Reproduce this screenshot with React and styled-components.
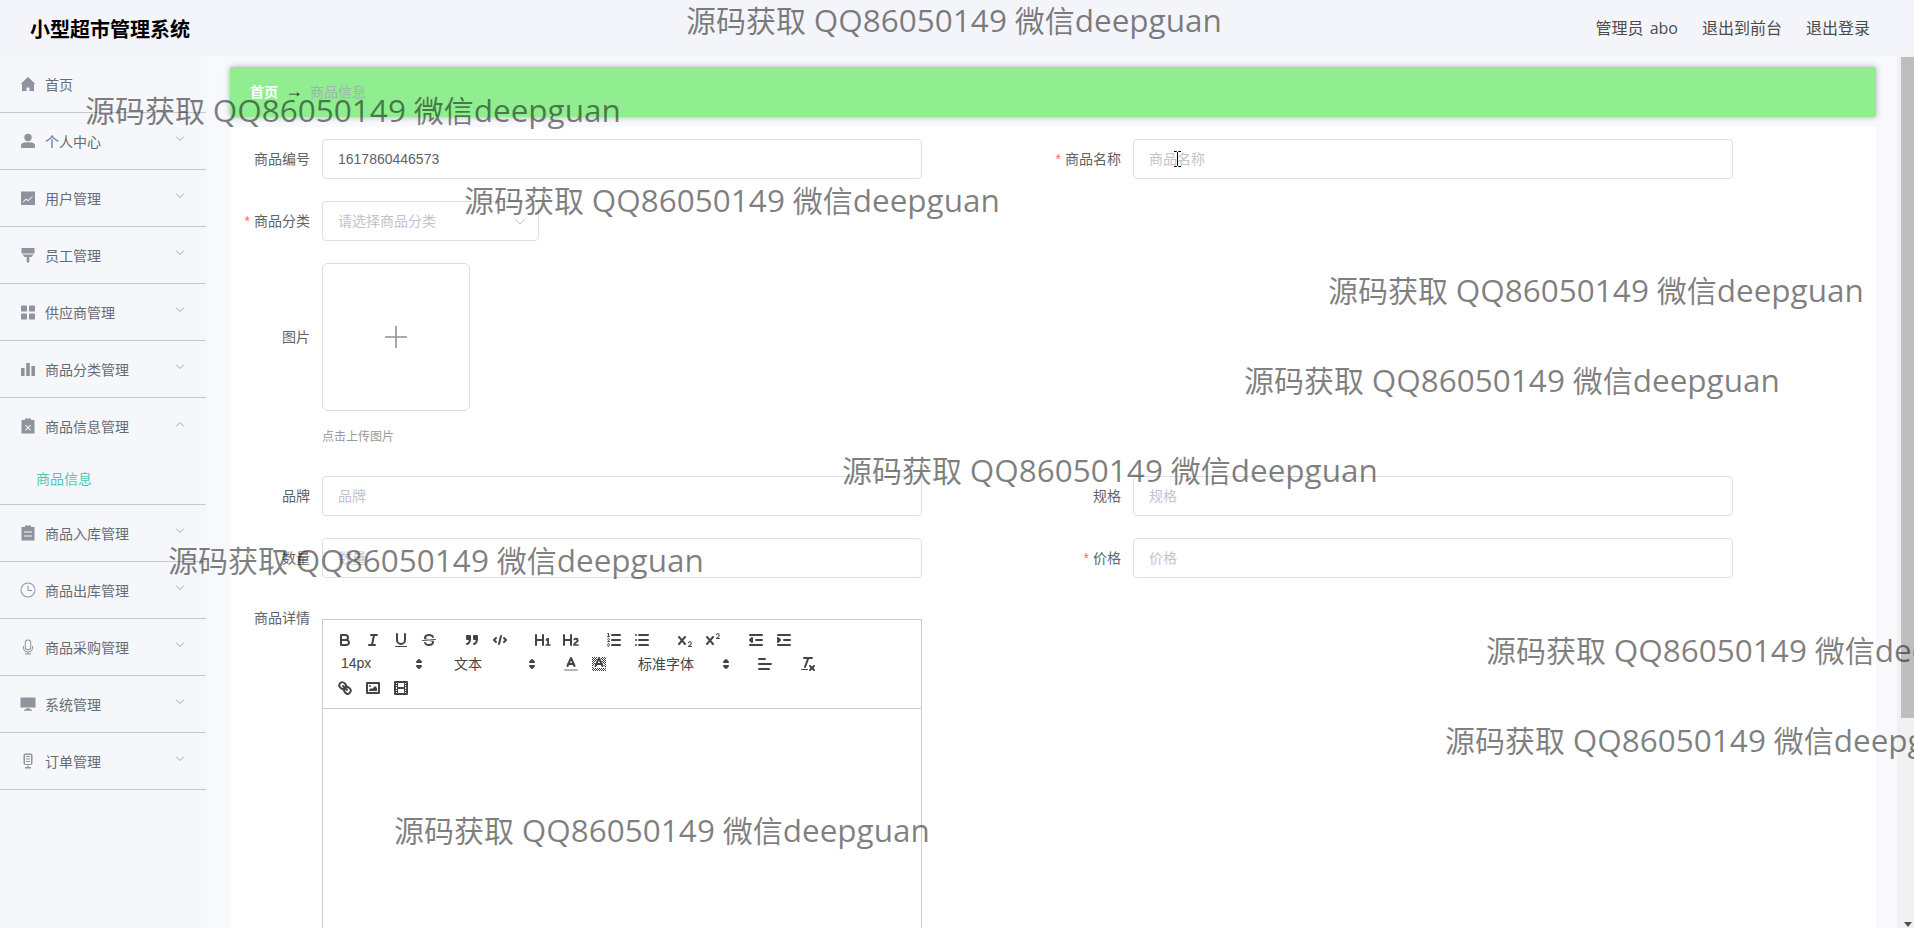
import styled, { createGlobalStyle } from "styled-components";

const GlobalStyle = createGlobalStyle`
  html, body {
    margin: 0;
    height: 100%;
    overflow: hidden;
    background: #f5f7fb;
    font-family: "Liberation Sans", "Noto Sans CJK SC", sans-serif;
  }
  * { box-sizing: border-box; }
`;

const Shell = styled.div`
  position: relative;
  display: flex;
  flex-direction: column;
  height: 100vh;
  overflow: hidden;
`;

const Header = styled.header`
  flex: none;
  display: flex;
  align-items: center;
  justify-content: space-between;
  height: 56px;
  padding: 0 44px 0 30px;
  background: #f4f5fa;
`;

const Brand = styled.h1`
  margin: 0;
  font-size: 20px;
  font-weight: 700;
  color: #000;
`;

const HeaderLinks = styled.nav`
  display: flex;
  gap: 24px;
  padding-bottom: 2px;
  font-family: "Open Sans", "Noto Sans CJK SC", sans-serif;
  font-size: 16px;
  word-spacing: 2px;
  color: #4c4c4c;
`;

const Body = styled.div`
  flex: 1;
  min-height: 0;
  display: flex;
`;

const Sidebar = styled.aside`
  flex: none;
  width: 206px;
`;

const NavRow = styled.div`
  display: flex;
  align-items: center;
  height: 57px;
  padding-left: 21px;
  border-bottom: 1px solid ${(p) => (p.$open ? "transparent" : "#c6c9d1")};
  font-size: 14px;
  color: #666b75;
`;

const NavIcon = styled.svg`
  flex: none;
  width: 16px;
  height: 16px;
  margin-left: -1px;
  margin-right: 9px;
  fill: #8f939d;
`;

const NavText = styled.span`
  flex: 1;
`;

const Chevron = styled.svg`
  flex: none;
  width: 10px;
  height: 6px;
  margin: 0 21px 4px 0;
  fill: none;
  stroke: #a3a6ad;
  stroke-width: 1;
`;

const SubRow = styled.div`
  display: flex;
  align-items: center;
  height: 50px;
  padding: 0 0 4px 36px;
  border-bottom: 1px solid #c6c9d1;
  font-size: 14px;
  color: #4fc8b8;
`;

const Content = styled.main`
  flex: 1;
  min-width: 0;
  padding: 11px 21px 0 24px;
  background: #f8f9fd;
`;

const Crumbs = styled.div`
  display: flex;
  align-items: center;
  height: 50px;
  padding: 0 0 2px 20px;
  border-radius: 2px;
  background: #90ee90;
  box-shadow: 0 0 6px rgba(0, 0, 0, 0.3);
  font-size: 14px;
`;

const CrumbHome = styled.span`
  font-weight: 700;
  color: #fff;
`;

const CrumbArrow = styled.span`
  width: 32px;
  text-align: center;
  font-size: 18px;
  line-height: 20px;
  color: #303133;
`;

const CrumbCurrent = styled.span`
  color: #9db6aa;
`;

const Panel = styled.section`
  margin-top: 10px;
  height: 900px;
  padding-top: 12px;
  background: #fff;
`;

const FormRow = styled.div`
  display: flex;
  margin-bottom: 22px;
`;

const Field = styled.div`
  display: flex;
  align-items: ${(p) => (p.$top ? "flex-start" : "center")};
  width: 811px;
`;

const Label = styled.label`
  flex: none;
  width: 80px;
  margin-right: 12px;
  padding-bottom: ${(p) => (p.$top ? "0" : "2px")};
  line-height: ${(p) => (p.$top ? "36px" : "normal")};
  text-align: right;
  font-size: 14px;
  color: #606266;
`;

const Star = styled.span`
  margin-right: 4px;
  color: #f56c6c;
`;

const Input = styled.input`
  display: block;
  width: ${(p) => p.$width || 600}px;
  height: 40px;
  padding: 0 15px;
  border: 1px solid #dcdfe6;
  border-radius: 4px;
  outline: none;
  background: #fff;
  font: inherit;
  font-size: 14px;
  color: #606266;

  &::placeholder {
    color: #c0c4cc;
    opacity: 1;
  }
`;

const InputWrap = styled.div`
  position: relative;
`;

const Caret = styled.svg`
  position: absolute;
  top: 17px;
  right: 13px;
  width: 12px;
  height: 7px;
  fill: none;
  stroke: #c0c4cc;
`;

const Cursor = styled.svg`
  position: absolute;
  top: 12px;
  left: 40px;
  width: 9px;
  height: 16px;
  fill: none;
  stroke: #000;
`;

const UploadBox = styled.div`
  display: flex;
  align-items: center;
  justify-content: center;
  width: 148px;
  height: 148px;
  border: 1px solid #d9dbe0;
  border-radius: 6px;
  background: #fff;
`;

const PlusIcon = styled.svg`
  width: 24px;
  height: 24px;
  stroke: #8c939d;
  stroke-width: 1.6;
`;

const UploadNote = styled.div`
  height: 65px;
  margin: -22px 0 0 92px;
  padding-top: 18px;
  font-size: 12px;
  line-height: 16px;
  color: #999;
`;

const Editor = styled.div`
  width: 600px;
  height: 400px;
  margin-top: 19px;
  border: 1px solid #ccc;
`;

const Toolbar = styled.div`
  display: flex;
  flex-wrap: wrap;
  padding: 8px;
  border-bottom: 1px solid #ccc;
`;

const ToolGroup = styled.span`
  display: flex;
  margin-right: 15px;
`;

const ToolButton = styled.button`
  flex: none;
  width: 28px;
  height: 24px;
  padding: 3px 5px;
  border: none;
  background: none;

  svg {
    display: block;
    width: 18px;
    height: 18px;
    fill: none;
    stroke: #444;
    stroke-width: 2;
    stroke-linecap: round;
    stroke-linejoin: round;
  }
  .f {
    fill: #444;
    stroke: none;
  }
  .t {
    stroke-width: 1;
  }
  .b {
    fill: #444;
    stroke: #444;
  }
  .l {
    opacity: 0.4;
  }
`;

const Picker = styled.span`
  display: flex;
  align-items: center;
  justify-content: space-between;
  width: ${(p) => p.$width}px;
  height: 24px;
  padding: 0 1px 0 10px;
  font-size: 14px;
  color: #444;

  svg {
    width: 18px;
    height: 18px;
    fill: none;
    stroke: #444;
    stroke-width: 2;
    stroke-linejoin: round;
  }
`;

const PickerText = styled.span`
  margin-top: -2px;
`;

const Scrollbar = styled.div`
  flex: none;
  display: flex;
  flex-direction: column;
  align-items: flex-end;
  width: 17px;
  background: #f1f1f1;
`;

const Thumb = styled.div`
  width: 13px;
  height: 661px;
  margin-top: 1px;
  background: #bebebe;
`;

const ScrollArrow = styled.div`
  margin: auto 2px 1px 0;
  width: 0;
  height: 0;
  border: 4px solid transparent;
  border-top: 5px solid #505050;
  border-bottom: none;
`;

const Watermark = styled.div`
  position: absolute;
  left: ${(p) => p.$x}px;
  top: ${(p) => p.$y}px;
  white-space: nowrap;
  pointer-events: none;
  font-family: "Open Sans", "Noto Sans CJK SC", sans-serif;
  font-size: 30px;
  line-height: 40px;
  color: rgba(0, 0, 0, 0.5);
`;

const WatermarkLatin = styled.span`
  font-size: 31.5px;
`;

const icons = {
  home: <path d="M8 1 L15.5 8 L14 8 L14 15 L9.5 15 L9.5 11.5 L6.5 11.5 L6.5 15 L2 15 L2 8 L.5 8 Z" />,
  user: (
    <>
      <circle cx="8" cy="4.5" r="3.7" />
      <path d="M1 15 V12.5 C1 10 4 9.3 8 9.3 C12 9.3 15 10 15 12.5 V15 Z" />
    </>
  ),
  chart: (
    <>
      <path fillRule="evenodd" d="M1 1.5 H15 V15 H1 Z M3 11.5 L6 8.5 L8 10 L12.5 6 L12.5 7 L8 11.2 L6 9.7 L3 12.7 Z" />
    </>
  ),
  staff: <path d="M1.5 1 H14.5 V6.5 H1.5 Z M2.5 7.5 H13.5 L11.5 10 H9.3 V15 L8 16 L6.7 15 V10 H4.5 Z" />,
  grid: (
    <>
      <rect x="1" y="1.5" width="6" height="6" rx=".6" />
      <rect x="9" y="1.5" width="6" height="6" rx=".6" />
      <rect x="1" y="9.5" width="6" height="6" rx=".6" />
      <rect x="9" y="9.5" width="6" height="6" rx=".6" />
    </>
  ),
  bars: (
    <>
      <rect x="1" y="7" width="3.6" height="8" />
      <rect x="6.2" y="2" width="3.6" height="13" />
      <rect x="11.4" y="5" width="3.6" height="10" />
    </>
  ),
  clipX: (
    <path
      fillRule="evenodd"
      d="M5 2 V.5 H11 V2 H14.5 V15.5 H1.5 V2 Z M5.7 6.7 L5 7.4 L7.3 9.7 L5 12 L5.7 12.7 L8 10.4 L10.3 12.7 L11 12 L8.7 9.7 L11 7.4 L10.3 6.7 L8 9 Z"
    />
  ),
  clip: (
    <path
      fillRule="evenodd"
      d="M5 2 V.5 H11 V2 H14.5 V15.5 H1.5 V2 Z M4 6.5 V7.5 H12 V6.5 Z M4 10.5 V11.5 H12 V10.5 Z"
    />
  ),
  clock: (
    <path
      fillRule="evenodd"
      d="M8 .5 A7.5 7.5 0 1 0 8 15.5 A7.5 7.5 0 1 0 8 .5 Z M8 1.5 A6.5 6.5 0 1 1 8 14.5 A6.5 6.5 0 1 1 8 1.5 Z M7.6 3.5 H8.6 V8 H12 V9 H7.6 Z"
    />
  ),
  mic: (
    <path
      fillRule="evenodd"
      d="M8 .5 A3.2 3.2 0 0 0 4.8 3.7 V8 A3.2 3.2 0 0 0 11.2 8 V3.7 A3.2 3.2 0 0 0 8 .5 Z M8 1.5 A2.2 2.2 0 0 1 10.2 3.7 V8 A2.2 2.2 0 0 1 5.8 8 V3.7 A2.2 2.2 0 0 1 8 1.5 Z M3 7 H4 V8.5 A4 4 0 0 0 12 8.5 V7 H13 V8.5 A5 5 0 0 1 8.5 13.4 V14.5 H11 V15.5 H5 V14.5 H7.5 V13.4 A5 5 0 0 1 3 8.5 Z"
    />
  ),
  screen: <path d="M.5 1.5 H15.5 V11.5 H.5 Z M4 14 L7 12.3 H9 L12 14 V14.8 H4 Z" />,
  order: (
    <path
      fillRule="evenodd"
      d="M5.5 .5 H10.5 A2 2 0 0 1 12.5 2.5 V10 A2 2 0 0 1 10.5 12 H5.5 A2 2 0 0 1 3.5 10 V2.5 A2 2 0 0 1 5.5 .5 Z M5 2 V11 H11 V2 Z M6 3 V4 H10 V3 Z M6 5.5 V6.5 H10 V5.5 Z M6 8 V9 H10 V8 Z M7.4 12.4 H8.6 V14 H11 V15.5 H5 V14 H7.4 Z"
    />
  ),
};

const navGroups = [
  { label: "首页", icon: "home", plain: true },
  { label: "个人中心", icon: "user" },
  { label: "用户管理", icon: "chart" },
  { label: "员工管理", icon: "staff" },
  { label: "供应商管理", icon: "grid" },
  { label: "商品分类管理", icon: "bars" },
  { label: "商品信息管理", icon: "clipX", open: true, sub: "商品信息" },
  { label: "商品入库管理", icon: "clip" },
  { label: "商品出库管理", icon: "clock" },
  { label: "商品采购管理", icon: "mic" },
  { label: "系统管理", icon: "screen" },
  { label: "订单管理", icon: "order" },
];

const waterMarks = [
  [686, 0],
  [85, 90],
  [464, 180],
  [1328, 270],
  [1244, 360],
  [842, 450],
  [168, 540],
  [1486, 630],
  [1445, 720],
  [394, 810],
];

const arrows = (
  <svg viewBox="0 0 18 18">
    <polygon points="7 11 9 13 11 11 7 11" />
    <polygon points="7 7 9 5 11 7 7 7" />
  </svg>
);

// dither cells of the highlight icon, left open around the letter
const checker = [];
for (let y = 2; y < 16; y++) {
  for (let x = 2; x < 16; x++) {
    const half = Math.max(0, (y - 3) * 0.44);
    const nearLetter = y <= 12 && Math.abs(x + 0.5 - 9) < half + 2;
    if ((x + y) % 2 === 0 && !nearLetter) {
      checker.push(<rect key={x + "-" + y} className="f" x={x} y={y} width="1" height="1" />);
    }
  }
}

const tools = {
  bold: (
    <>
      <path d="M5,4H9.5A2.5,2.5,0,0,1,12,6.5v0A2.5,2.5,0,0,1,9.5,9H5A0,0,0,0,1,5,9V4A0,0,0,0,1,5,4Z" />
      <path d="M5,9h5.5A2.5,2.5,0,0,1,13,11.5v0A2.5,2.5,0,0,1,10.5,14H5a0,0,0,0,1,0,0V9A0,0,0,0,1,5,9Z" />
    </>
  ),
  italic: (
    <>
      <line x1="7" x2="13" y1="4" y2="4" />
      <line x1="5" x2="11" y1="14" y2="14" />
      <line x1="8" x2="10" y1="14" y2="4" />
    </>
  ),
  underline: (
    <>
      <path d="M5,3V9a4.012,4.012,0,0,0,4,4H9a4.012,4.012,0,0,0,4-4V3" />
      <rect className="f" height="1" rx=".5" ry=".5" width="12" x="3" y="15" />
    </>
  ),
  strike: (
    <>
      <line className="t" x1="15.5" x2="2.5" y1="8.5" y2="9.5" />
      <path className="f" d="M9.007,8C6.542,7.791,6,7.519,6,6.5,6,5.792,7.283,5,9,5c1.571,0,2.765.679,2.969,1.309a1,1,0,0,0,1.9-.617C13.356,4.106,11.354,3,9,3,6.2,3,4,4.538,4,6.5a3.2,3.2,0,0,0,.5,1.843Z" />
      <path className="f" d="M8.984,10C11.457,10.208,12,10.479,12,11.5c0,.708-1.283,1.5-3,1.5-1.571,0-2.765-.679-2.969-1.309a1,1,0,1,0-1.9.617C4.644,13.894,6.646,15,9,15c2.8,0,5-1.538,5-3.5a3.2,3.2,0,0,0-.5-1.843Z" />
    </>
  ),
  quote: (
    <>
      <rect className="b" height="3" width="3" x="4" y="5" />
      <rect className="b" height="3" width="3" x="11" y="5" />
      <path d="M7,8c0,4.031-3,5-3,5" />
      <path d="M14,8c0,4.031-3,5-3,5" />
    </>
  ),
  code: (
    <>
      <polyline points="5 7 3 9 5 11" />
      <polyline points="13 7 15 9 13 11" />
      <line x1="10" x2="8" y1="5" y2="13" />
    </>
  ),
  h1: (
    <path className="f" d="M10,4V14a1,1,0,0,1-2,0V10H3v4a1,1,0,0,1-2,0V4A1,1,0,0,1,3,4V8H8V4a1,1,0,0,1,2,0Zm6.06787,9.209H14.98975V7.59863a.54085.54085,0,0,0-.605-.60547h-.62744a1.01119,1.01119,0,0,0-.748.29688L11.645,8.56641a.5435.5435,0,0,0-.022.8584l.28613.30762a.53861.53861,0,0,0,.84717.0332l.09912-.08789a1.2137,1.2137,0,0,0,.2417-.35254h.02246s-.01123.30859-.01123.60547V13.209H12.041a.54085.54085,0,0,0-.605.60547v.43945a.54085.54085,0,0,0,.605.60547h4.02686a.54085.54085,0,0,0,.605-.60547v-.43945A.54085.54085,0,0,0,16.06787,13.209Z" />
  ),
  h2: (
    <path className="f" d="M16.73975,13.81445v.43945a.54085.54085,0,0,1-.605.60547H11.855a.58392.58392,0,0,1-.64893-.60547V14.0127c0-2.90527,3.39941-3.42187,3.39941-4.55469a.77675.77675,0,0,0-.84717-.78125,1.17684,1.17684,0,0,0-.83594.38477c-.2749.26367-.561.374-.85791.13184l-.4292-.34082c-.30811-.24219-.38525-.51758-.1543-.81445a2.97155,2.97155,0,0,1,2.45361-1.17676,2.45393,2.45393,0,0,1,2.68408,2.40918c0,2.45312-3.1792,2.92676-3.27832,3.93848h2.79443A.54085.54085,0,0,1,16.73975,13.81445ZM9,3A.99974.99974,0,0,0,8,4V8H3V4A1,1,0,0,0,1,4V14a1,1,0,0,0,2,0V10H8v4a1,1,0,0,0,2,0V4A.99974.99974,0,0,0,9,3Z" />
  ),
  ol: (
    <>
      <line x1="7" x2="15" y1="4" y2="4" />
      <line x1="7" x2="15" y1="9" y2="9" />
      <line x1="7" x2="15" y1="14" y2="14" />
      <line className="t" x1="2.5" x2="4.5" y1="5.5" y2="5.5" />
      <path className="f" d="M3.5,6A0.5,0.5,0,0,1,3,5.5V3.085l-0.276.138A0.5,0.5,0,0,1,2.053,3c-0.124-.247-0.023-0.324.224-0.447l1-.5A0.5,0.5,0,0,1,4,2.5v3A0.5,0.5,0,0,1,3.5,6Z" />
      <path className="t" d="M4.5,10.5h-2c0-.234,1.85-1.076,1.85-2.234A0.959,0.959,0,0,0,2.5,8.156" />
      <path className="t" d="M2.5,14.846a0.959,0.959,0,0,0,1.85-.109A0.7,0.7,0,0,0,3.75,14a0.688,0.688,0,0,0,.6-0.736,0.959,0.959,0,0,0-1.85-.109" />
    </>
  ),
  ul: (
    <>
      <line x1="6" x2="15" y1="4" y2="4" />
      <line x1="6" x2="15" y1="9" y2="9" />
      <line x1="6" x2="15" y1="14" y2="14" />
      <line x1="3" x2="3" y1="4" y2="4" />
      <line x1="3" x2="3" y1="9" y2="9" />
      <line x1="3" x2="3" y1="14" y2="14" />
    </>
  ),
  sub: (
    <>
      <path className="f" d="M15.5,15H13.861a3.858,3.858,0,0,0,1.914-2.975,1.8,1.8,0,0,0-1.6-1.751A1.921,1.921,0,0,0,12.021,11.7a0.50013,0.50013,0,1,0,.957.291h0a0.914,0.914,0,0,1,1.053-.725,0.81,0.81,0,0,1,.744.762c0,1.076-1.16971,1.86982-1.93971,2.43082A1.45639,1.45639,0,0,0,12,15.5a0.5,0.5,0,0,0,.5.5h3A0.5,0.5,0,0,0,15.5,15Z" />
      <path className="f" d="M9.65,5.241a1,1,0,0,0-1.409.108L6,7.964,3.759,5.349A1,1,0,0,0,2.192,6.59178Q2.21541,6.6213,2.241,6.649L4.684,9.5,2.241,12.35A1,1,0,0,0,3.71,13.70722q0.02557-.02768.049-0.05722L6,11.036,8.241,13.65a1,1,0,1,0,1.567-1.24277Q9.78459,12.3777,9.759,12.35L7.316,9.5,9.759,6.651A1,1,0,0,0,9.65,5.241Z" />
    </>
  ),
  sup: (
    <>
      <path className="f" d="M15.5,7H13.861a4.015,4.015,0,0,0,1.914-2.975,1.8,1.8,0,0,0-1.6-1.751A1.922,1.922,0,0,0,12.021,3.7a0.5,0.5,0,1,0,.957.291,0.917,0.917,0,0,1,1.053-.725,0.81,0.81,0,0,1,.744.762c0,1.077-1.164,1.925-1.934,2.486A1.423,1.423,0,0,0,12,7.5a0.5,0.5,0,0,0,.5.5h3A0.5,0.5,0,0,0,15.5,7Z" />
      <path className="f" d="M9.651,5.241a1,1,0,0,0-1.41.108L6,7.964,3.759,5.349a1,1,0,1,0-1.519,1.3L4.683,9.5,2.241,12.35a1,1,0,1,0,1.519,1.3L6,11.036,8.241,13.65a1,1,0,0,0,1.519-1.3L7.317,9.5,9.759,6.651A1,1,0,0,0,9.651,5.241Z" />
    </>
  ),
  outdent: (
    <>
      <line x1="3" x2="15" y1="14" y2="14" />
      <line x1="3" x2="15" y1="4" y2="4" />
      <line x1="9" x2="15" y1="9" y2="9" />
      <polyline className="b" points="5 7 5 11 3 9 5 7" />
    </>
  ),
  indent: (
    <>
      <line x1="3" x2="15" y1="14" y2="14" />
      <line x1="3" x2="15" y1="4" y2="4" />
      <line x1="9" x2="15" y1="9" y2="9" />
      <polyline className="b" points="3 7 3 11 5 9 3 7" />
    </>
  ),
  color: (
    <>
      <line className="l" x1="3" x2="15" y1="15" y2="15" />
      <polyline points="5.5 11 9 3 12.5 11" />
      <line x1="11.63" x2="6.38" y1="9" y2="9" />
    </>
  ),
  background: (
    <>
      {checker}
      <polyline points="5.5 11 9 3 12.5 11" />
      <line x1="11.63" x2="6.38" y1="9" y2="9" />
    </>
  ),
  align: (
    <>
      <line x1="3" x2="15" y1="9" y2="9" />
      <line x1="3" x2="13" y1="14" y2="14" />
      <line x1="3" x2="9" y1="4" y2="4" />
    </>
  ),
  clean: (
    <>
      <line x1="5" x2="13" y1="3" y2="3" />
      <line x1="6" x2="9.35" y1="12" y2="3" />
      <line x1="11" x2="15" y1="11" y2="15" />
      <line x1="15" x2="11" y1="11" y2="15" />
      <rect className="f" height="1" rx=".5" ry=".5" width="7" x="2" y="14" />
    </>
  ),
  link: (
    <>
      <line x1="7" x2="11" y1="7" y2="11" />
      <path d="M8.9,4.577a3.476,3.476,0,0,1,.36,4.679A3.476,3.476,0,0,1,4.577,8.9C3.185,7.5,2.035,6.4,4.217,4.217S7.5,3.185,8.9,4.577Z" />
      <path d="M13.423,9.1a3.476,3.476,0,0,0-4.679-.36,3.476,3.476,0,0,0,.36,4.679c1.392,1.392,2.5,2.542,4.679.36S14.815,10.5,13.423,9.1Z" />
    </>
  ),
  image: (
    <>
      <rect height="10" width="12" x="3" y="4" />
      <circle className="f" cx="6" cy="7" r="1" />
      <polyline className="f" points="5 12 5 11 7 9 8 10 11 7 13 9 13 12 5 12" />
    </>
  ),
  video: (
    <>
      <rect height="12" width="12" x="3" y="3" />
      <rect className="f" height="12" width="1" x="5" y="3" />
      <rect className="f" height="12" width="1" x="12" y="3" />
      <rect className="f" height="2" width="8" x="5" y="8" />
      <rect className="f" height="1" width="3" x="3" y="5" />
      <rect className="f" height="1" width="3" x="3" y="7" />
      <rect className="f" height="1" width="3" x="3" y="10" />
      <rect className="f" height="1" width="3" x="3" y="12" />
      <rect className="f" height="1" width="3" x="12" y="5" />
      <rect className="f" height="1" width="3" x="12" y="7" />
      <rect className="f" height="1" width="3" x="12" y="10" />
      <rect className="f" height="1" width="3" x="12" y="12" />
    </>
  ),
};

const Tool = ({ name }) => (
  <ToolButton type="button">
    <svg viewBox="0 0 18 18">{tools[name]}</svg>
  </ToolButton>
);

const toolGroups = [
  ["bold", "italic", "underline", "strike"],
  ["quote", "code"],
  ["h1", "h2"],
  ["ol", "ul"],
  ["sub", "sup"],
  ["outdent", "indent"],
  [{ text: "14px", width: 98 }],
  [{ text: "文本", width: 98 }],
  ["color", "background"],
  [{ text: "标准字体", width: 108 }],
  ["align"],
  ["clean"],
  ["link", "image", "video"],
];

const App = () => {
  return (
    <Shell>
      <GlobalStyle />
      <Header>
        <Brand>小型超市管理系统</Brand>
        <HeaderLinks>
          <span>管理员 abo</span>
          <span>退出到前台</span>
          <span>退出登录</span>
        </HeaderLinks>
      </Header>
      <Body>
        <Sidebar>
          {navGroups.map((item) => (
            <div key={item.label}>
              <NavRow $open={item.open}>
                <NavIcon viewBox="0 0 16 16">{icons[item.icon]}</NavIcon>
                <NavText>{item.label}</NavText>
                {!item.plain && (
                  <Chevron viewBox="0 0 10 6">
                    <polyline points={item.open ? "1 5.5 5 1.5 9 5.5" : "1 .5 5 4.5 9 .5"} />
                  </Chevron>
                )}
              </NavRow>
              {item.sub && <SubRow>{item.sub}</SubRow>}
            </div>
          ))}
        </Sidebar>
        <Content>
          <Crumbs>
            <CrumbHome>首页</CrumbHome>
            <CrumbArrow>→</CrumbArrow>
            <CrumbCurrent>商品信息</CrumbCurrent>
          </Crumbs>
          <Panel>
            <FormRow>
              <Field>
                <Label>商品编号</Label>
                <Input readOnly value="1617860446573" />
              </Field>
              <Field>
                <Label>
                  <Star>*</Star>商品名称
                </Label>
                <InputWrap>
                  <Input placeholder="商品名称" />
                  <Cursor viewBox="0 0 9 16">
                    <path d="M1 .5 H3.5 L4.5 1.5 L5.5 .5 H8 M4.5 1.5 V14.5 M1 15.5 H3.5 L4.5 14.5 L5.5 15.5 H8" />
                  </Cursor>
                </InputWrap>
              </Field>
            </FormRow>
            <FormRow>
              <Field>
                <Label>
                  <Star>*</Star>商品分类
                </Label>
                <InputWrap>
                  <Input $width={217} readOnly placeholder="请选择商品分类" />
                  <Caret viewBox="0 0 12 7">
                    <polyline points="1 1 6 6 11 1" />
                  </Caret>
                </InputWrap>
              </Field>
            </FormRow>
            <FormRow>
              <Field>
                <Label>图片</Label>
                <UploadBox>
                  <PlusIcon viewBox="0 0 24 24">
                    <path d="M1 12 H23 M12 1 V23" />
                  </PlusIcon>
                </UploadBox>
              </Field>
            </FormRow>
            <UploadNote>点击上传图片</UploadNote>
            <FormRow>
              <Field>
                <Label>品牌</Label>
                <Input placeholder="品牌" />
              </Field>
              <Field>
                <Label>规格</Label>
                <Input placeholder="规格" />
              </Field>
            </FormRow>
            <FormRow>
              <Field>
                <Label>数量</Label>
                <Input placeholder="数量" />
              </Field>
              <Field>
                <Label>
                  <Star>*</Star>价格
                </Label>
                <Input placeholder="价格" />
              </Field>
            </FormRow>
            <FormRow>
              <Field $top>
                <Label $top>商品详情</Label>
                <Editor>
                  <Toolbar>
                    {toolGroups.map((group, i) => (
                      <ToolGroup key={i}>
                        {group.map((t, j) =>
                          t.text ? (
                            <Picker key={j} $width={t.width}>
                              <PickerText>{t.text}</PickerText>
                              {arrows}
                            </Picker>
                          ) : (
                            <Tool key={j} name={t} />
                          )
                        )}
                      </ToolGroup>
                    ))}
                  </Toolbar>
                </Editor>
              </Field>
            </FormRow>
          </Panel>
        </Content>
        <Scrollbar>
          <Thumb />
          <ScrollArrow />
        </Scrollbar>
      </Body>
      {waterMarks.map(([x, y]) => (
        <Watermark key={y} $x={x} $y={y}>
          源码获取 <WatermarkLatin>QQ86050149</WatermarkLatin> 微信<WatermarkLatin>deepguan</WatermarkLatin>
        </Watermark>
      ))}
    </Shell>
  );
};

export default App;
